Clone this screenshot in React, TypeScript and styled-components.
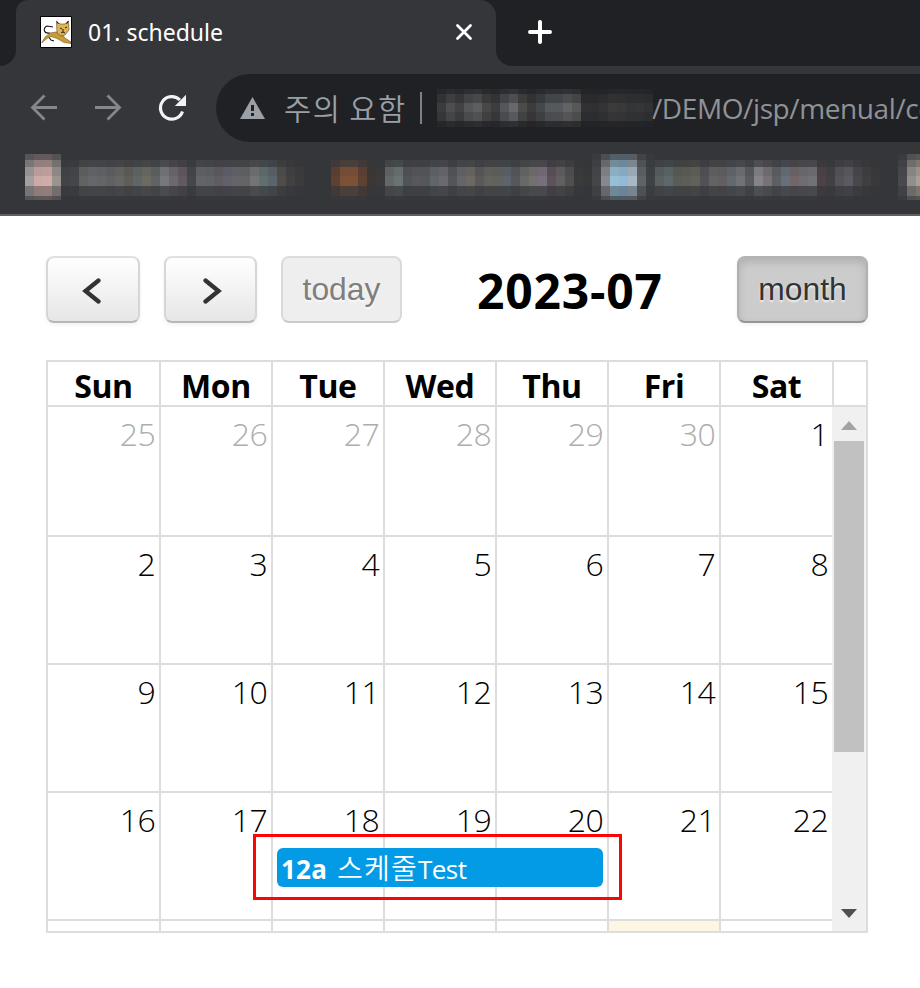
import React from 'react';
import styled, { createGlobalStyle, css } from 'styled-components';

const GlobalStyle = createGlobalStyle`
  * { box-sizing: border-box; }
  html, body { margin: 0; padding: 0; background: #fff; overflow: hidden; }
  body { font-family: "Open Sans", "Noto Sans CJK KR", sans-serif; }
  svg { flex: none; }
`;

const Page = styled.div`
  width: 920px;
  height: 988px;
  overflow: hidden;
  background: #fff;
`;

/* ---------- Browser chrome ---------- */

const Chrome = styled.header`
  height: 216px;
  background: #35363a;
  border-bottom: 2px solid #5f5e63;
`;

const TabStrip = styled.div`
  display: flex;
  height: 66px;
`;

const StripStart = styled.div`
  width: 16px;
  background: #202124;
  border-bottom-right-radius: 16px;
`;

const TabBack = styled.div`
  width: 480px;
  background: #202124;
`;

const Tab = styled.div`
  display: flex;
  align-items: center;
  height: 66px;
  padding: 0 22px 2px 24px;
  background: #35363a;
  border-radius: 12px 16px 0 0;
`;

const TabTitle = styled.span`
  flex: 1;
  margin-left: 16px;
  font-family: "Noto Sans", "Open Sans", sans-serif;
  font-size: 23px;
  line-height: 32px;
  letter-spacing: 0;
  color: #fff;
`;

const StripEnd = styled.div`
  flex: 1;
  padding: 20px 0 0 32px;
  background: #202124;
  border-bottom-left-radius: 16px;
`;

const Toolbar = styled.div`
  display: flex;
  align-items: center;
  height: 84px;
`;

const NavIcons = styled.div`
  display: flex;
  gap: 36px;
  width: 216px;
  padding-left: 30px;
`;

const AddressBar = styled.div`
  display: flex;
  align-items: center;
  flex: 1;
  min-width: 0;
  height: 68px;
  padding-left: 24px;
  overflow: hidden;
  background: #202124;
  border-radius: 34px 0 0 34px;
  white-space: nowrap;
`;

const Warning = styled.span`
  flex: none;
  width: 121px;
  margin: -3px 0 0 19px;
  font-family: "Noto Sans CJK KR", sans-serif;
  font-size: 29.5px;
  font-weight: 350;
  line-height: 40px;
  letter-spacing: 1.5px;
  color: #9aa0a6;
`;

const Divider = styled.span`
  flex: none;
  width: 2px;
  height: 32px;
  margin: 0 15px 0 15px;
  background: #808184;
`;

const Url = styled.span`
  margin-left: -1px;
  font-size: 28px;
  font-weight: 400;
  line-height: 40px;
  letter-spacing: -0.4px;
  color: #8f9296;
`;

const Bookmarks = styled.div`
  display: flex;
  padding: 4px 0 0 25px;
`;

const MosaicRow = styled.div<{ $h: number; $o: number }>`
  display: flex;
  height: ${p => p.$h}px;
  opacity: ${p => p.$o};
`;

const MosaicCell = styled.i<{ $c: string }>`
  flex: none;
  width: 9px;
  height: 100%;
  background: ${p => p.$c};
`;

type Band = [number, number];

function Mosaic({ colors, bands }: { colors: string; bands: Band[] }) {
  const cells = colors.trim().split(/\s+/);
  return (
    <div>
      {bands.map(([h, o], i) => (
        <MosaicRow key={i} $h={h} $o={o}>
          {cells.map((c, k) => (
            <MosaicCell key={k} $c={c === '-' ? 'transparent' : '#' + c} />
          ))}
        </MosaicRow>
      ))}
    </div>
  );
}

const ICON_BANDS: Band[] = [[6, 0.3], [7, 0.62], [9, 0.88], [10, 1], [10, 0.6], [4, 0.28]];
const TEXT_BANDS: Band[] = [[6, 0], [7, 0.3], [9, 0.88], [10, 1], [10, 0.32], [4, 0.05]];
const ADDRESS_BANDS: Band[] = [[5, 0.25], [9, 0.65], [9, 1], [9, 0.8], [6, 0.22]];

const BOOKMARKS: { bands: Band[]; colors: string }[] = [
  { bands: ICON_BANDS, colors: 'a59e9f ccaba6 d0aca7 9a9490' },
  {
    bands: TEXT_BANDS,
    colors:
      '414447 44474a 626261 66676a 646567 606163 666664 5f5d58 5e6767 6c6b62 606363 77787d 6c686d 625a60 44474c 626468 5f6366 5f5b62 60616d 646469 646466 737475 626f6f 5b646a 4f4d4c 414142 3b3b3d',
  },
  { bands: TEXT_BANDS, colors: '- - - 5e4131 7c5135 7c5135 5e4131 3c3634 3a3a3d' },
  {
    bands: TEXT_BANDS,
    colors:
      '646867 6a7373 505457 58575b 56575b 5f656a 69696f 54555a 656567 6c6964 59595a 62635c 61625d 5c6469 55575a 666965 73716f 786f7c 5c5257 625f61 514e4f 3b3a3a 37383a',
  },
  { bands: ICON_BANDS, colors: '44474a 86888f 97bfd3 92b9d6 a8b8c6 5f6266 3e4245' },
  {
    bands: TEXT_BANDS,
    colors:
      '59605f 5c686a 5c5c56 5d5e57 636258 515156 646262 625f60 626a6d 707277 5a5a60 858489 787176 5c5f63 67707a 71666a 6f6d72 717178 4e4246 414044 555357 5a5a60 48484b 3f3f41 3a3939 - -',
  },
  { bands: ICON_BANDS, colors: '48494c 918f8b aa9f90' },
];

const ADDRESS =
  '393d3e 4e4e4f 414244 545658 5e5e5f 484848 3d3d40 53575b 67676c 4c4b4a 3d3b3c 44484b 55595c 56595c 636363 585757 303133 303032 333436 3b3b3c 39393a 343537 353638 303234';

function Favicon() {
  return (
    <svg width="32" height="32" viewBox="0 0 32 32">
      <path d="M.5.5h31v31H.5z" fill="#fff" stroke="#000" />
      <path d="M10 17C3 18 3 12 7 10l6 1M8 20l3 4 3 1" fill="none" stroke="#111" strokeWidth="1.1" />
      <path d="M1.500 27 5 21l5-4 6-1 5 1 4 5 6 4v1.500l-7-1-7-4-6-2-4 2-5 4z" fill="#c99b38" stroke="#5e471c" strokeWidth=".5" />
      <path d="m16.500 6 4 2h4l4-3 .5 9-4 5-4 1-4-3z" fill="#dfb553" stroke="#5c4829" strokeWidth=".6" />
      <path d="m16.500 5 2 3M28.500 5l-2 3M20 12l2 1M25 12l2-1M23 13v3l-2 1M23 16l2 1" stroke="#222" fill="none" strokeWidth="1" />
    </svg>
  );
}

function BrowserChrome() {
  return (
    <Chrome>
      <TabStrip>
        <StripStart />
        <TabBack>
          <Tab>
            <Favicon />
            <TabTitle>01. schedule</TabTitle>
            <svg width="20" height="20" viewBox="0 0 20 20">
              <path d="m3.500 3.500 13 13m0-13-13 13" stroke="#fff" strokeWidth="2.8" strokeLinecap="round" />
            </svg>
          </Tab>
        </TabBack>
        <StripEnd>
          <svg width="24" height="24" viewBox="0 0 24 24">
            <path d="M12 2v20M2 12h20" stroke="#fff" strokeWidth="4" strokeLinecap="round" />
          </svg>
        </StripEnd>
      </TabStrip>
      <Toolbar>
        <NavIcons>
          <svg width="28" height="28" viewBox="0 0 28 28" fill="none" stroke="#86878a" strokeWidth="2.800">
            <path d="M27 13.500H3M14.500 1.500 2.500 13.500l12 12" />
          </svg>
          <svg width="28" height="28" viewBox="0 0 28 28" fill="none" stroke="#86878a" strokeWidth="2.800">
            <path d="M1 13.500h24M13.500 1.500l12 12-12 12" />
          </svg>
          <svg width="28" height="28" viewBox="0 0 28 28" fill="none">
            <path d="M24.500 17.500a11.300 11.300 0 1 1-2.600-11.500" stroke="#f1f3f4" strokeWidth="3.200" />
            <path d="M28 .8V12H16.800z" fill="#f1f3f4" />
          </svg>
        </NavIcons>
        <AddressBar>
          <svg width="25" height="22" viewBox="0 0 25 22">
            <path d="M12.500 0 25 22H0z" fill="#9aa0a6" />
            <path d="M11 8h3v6h-3zM11 16h3v3h-3z" fill="#202124" />
          </svg>
          <Warning>주의 요함</Warning>
          <Divider />
          <Mosaic colors={ADDRESS} bands={ADDRESS_BANDS} />
          <Url>/DEMO/jsp/menual/co</Url>
        </AddressBar>
      </Toolbar>
      <Bookmarks>
        {BOOKMARKS.map((b, i) => (
          <Mosaic key={i} colors={b.colors} bands={b.bands} />
        ))}
      </Bookmarks>
    </Chrome>
  );
}

/* ---------- Calendar ---------- */

const Calendar = styled.main`
  width: 822px;
  margin: 40px 0 0 46px;
`;

const CalendarHeader = styled.div`
  display: flex;
  align-items: center;
  height: 67px;
`;

const Button = styled.button<{ $w: number; $state?: 'disabled' | 'active' }>`
  display: flex;
  align-items: center;
  justify-content: center;
  width: ${p => p.$w}px;
  height: 67px;
  padding: 0;
  border: 2px solid;
  border-color: #e0e0e0 #d6d6d6 #b7b7b7;
  border-radius: 8px;
  background: linear-gradient(#fff, #e6e6e6);
  box-shadow: 0 2px 4px rgba(0, 0, 0, 0.06);
  color: #333;
  font-family: "Liberation Sans", Arial, sans-serif;
  font-size: 31.8px;
  line-height: 36px;
  text-shadow: 0 2px 2px rgba(255, 255, 255, 0.75);

  & > span { margin-top: -2px; }

  ${p => p.$state === 'disabled' && css`
    border-color: #dcdcdc #d9d9d9 #cbcbcb;
    background: #eee;
    box-shadow: none;
    color: #7e7e7e;
  `}
  ${p => p.$state === 'active' && css`
    border-color: #b3b3b3 #b0b0b0 #969696;
    background: #ccc;
    box-shadow: inset 0 4px 8px rgba(0, 0, 0, 0.14), 0 2px 4px rgba(0, 0, 0, 0.06);
  `}
`;

const ButtonGroup = styled.div`
  display: flex;
  gap: 24px;
`;

const Title = styled.h2`
  flex: 1;
  margin: 2px 0 0;
  padding-left: 75px;
  font-size: 48px;
  line-height: 60px;
  font-weight: 680;
  letter-spacing: 0.8px;
  white-space: nowrap;
  color: #000;
`;

const Frame = styled.div`
  position: relative;
  height: 573px;
  margin-top: 37px;
  border: 2px solid #ddd;
`;

const Weekdays = styled.div`
  display: grid;
  grid-template-columns: 113px repeat(5, 112px) 113px 1fr;
  height: 45px;
  border-bottom: 2px solid #ddd;
`;

const Weekday = styled.div<{ $last?: boolean }>`
  border-right: ${p => (p.$last ? 0 : 2)}px solid #ddd;
  font-size: 32px;
  font-weight: 700;
  line-height: 47px;
  text-align: center;
  letter-spacing: -0.4px;
  color: #000;
`;

const Scroller = styled.div`
  display: flex;
  height: 524px;
  overflow: hidden;
`;

const Weeks = styled.div`
  width: 784px;
`;

const Week = styled.div<{ $h: number }>`
  display: grid;
  grid-template-columns: 113px repeat(5, 112px) 111px;
  height: ${p => p.$h}px;
`;

const Day = styled.div<{ $muted?: boolean; $today?: boolean; $last?: boolean }>`
  padding: 5px 4px 0 0;
  border-right: ${p => (p.$last ? 0 : 2)}px solid #ddd;
  border-bottom: 2px solid #ddd;
  background: ${p => (p.$today ? '#fcf6e3' : '#fff')};
  color: ${p => (p.$muted ? '#adadad' : '#000')};
  font-size: 32px;
  font-weight: 330;
  line-height: 44px;
  letter-spacing: -0.7px;
  text-align: right;
`;

const Scrollbar = styled.div`
  display: flex;
  flex-direction: column;
  align-items: center;
  width: 34px;
  padding: 14px 0 13px;
  background: #f0f0f0;
`;

const Thumb = styled.div`
  width: 30px;
  height: 311px;
  margin: 11px 0 auto;
  background: #c1c1c1;
`;

const Event = styled.div`
  position: absolute;
  left: 229px;
  top: 486px;
  display: flex;
  align-items: center;
  width: 326px;
  height: 39px;
  padding: 2px 5px 0 4px;
  border-radius: 6px;
  background: #039be5;
  color: #fff;
  font-size: 26px;
  line-height: 36px;
  letter-spacing: -0.5px;
  white-space: nowrap;
`;

const EventTime = styled.strong`
  margin-right: 10px;
  font-weight: 700;
  letter-spacing: 0.2px;
`;

const EventName = styled.span`
  margin-top: -3px;
  font-family: "Noto Sans CJK KR", sans-serif;
  font-size: 28px;
  font-weight: 350;
  letter-spacing: 1.2px;
`;

const Highlight = styled.div`
  position: absolute;
  left: 205px;
  top: 472px;
  width: 369px;
  height: 66px;
  border: 3px solid #fb0505;
`;

const WEEKDAYS = ['Sun', 'Mon', 'Tue', 'Wed', 'Thu', 'Fri', 'Sat'];

const WEEKS: { height: number; days: string[] }[] = [
  { height: 130, days: ['25', '26', '27', '28', '29', '30', '1'] },
  { height: 128, days: ['2', '3', '4', '5', '6', '7', '8'] },
  { height: 128, days: ['9', '10', '11', '12', '13', '14', '15'] },
  { height: 128, days: ['16', '17', '18', '19', '20', '21', '22'] },
  { height: 128, days: ['', '', '', '', '', '', ''] },
];

export default function App() {
  return (
    <Page>
      <GlobalStyle />
      <BrowserChrome />
      <Calendar>
        <CalendarHeader>
          <ButtonGroup>
            <Button $w={94} aria-label="Previous">
              <svg width="24" height="28" viewBox="0 0 24 28">
                <path d="M17.500 4.500 4.500 15l13 10.500" fill="none" stroke="#333" strokeWidth="4.300" strokeLinecap="round" />
              </svg>
            </Button>
            <Button $w={93} aria-label="Next">
              <svg width="24" height="28" viewBox="0 0 24 28">
                <path d="m6.500 4.500 13 10.500-13 10.500" fill="none" stroke="#333" strokeWidth="4.300" strokeLinecap="round" />
              </svg>
            </Button>
            <Button $w={121} $state="disabled"><span>today</span></Button>
          </ButtonGroup>
          <Title>2023-07</Title>
          <Button $w={131} $state="active"><span>month</span></Button>
        </CalendarHeader>
        <Frame>
          <Weekdays>
            {WEEKDAYS.map(d => <Weekday key={d}>{d}</Weekday>)}
            <Weekday $last />
          </Weekdays>
          <Scroller>
            <Weeks>
              {WEEKS.map((w, r) => (
                <Week key={r} $h={w.height}>
                  {w.days.map((d, c) => (
                    <Day key={c} $last={c === 6} $muted={r === 0 && c < 6} $today={r === 4 && c === 5}>{d}</Day>
                  ))}
                </Week>
              ))}
            </Weeks>
            <Scrollbar>
              <svg width="16" height="9" viewBox="0 0 16 9"><path d="M8 0l8 9H0z" fill="#a3a3a3" /></svg>
              <Thumb />
              <svg width="16" height="9" viewBox="0 0 16 9"><path d="M0 0h16L8 9z" fill="#505050" /></svg>
            </Scrollbar>
          </Scroller>
          <Event>
            <EventTime>12a</EventTime>
            <EventName>스케줄</EventName>
            <span>Test</span>
          </Event>
          <Highlight />
        </Frame>
      </Calendar>
    </Page>
  );
}
